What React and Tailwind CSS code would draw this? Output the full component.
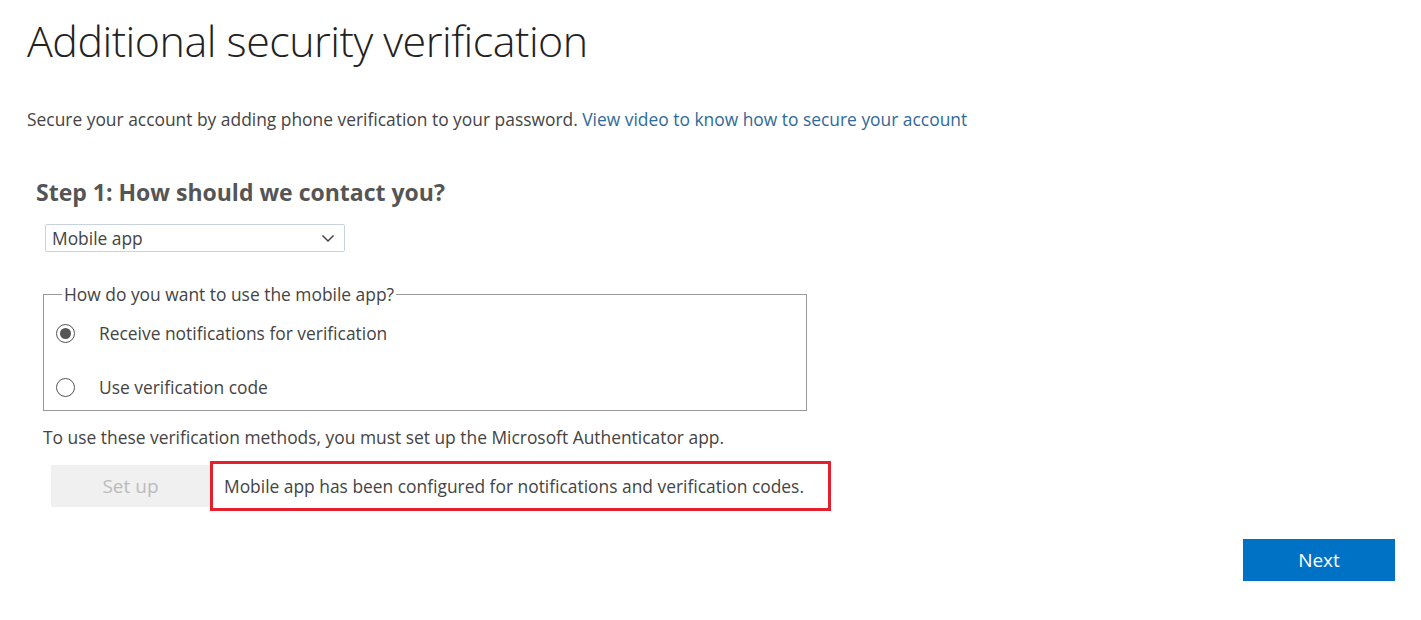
export default function App() {
  return (
    <div className="min-h-[620px] w-full bg-white text-[#333] font-['Open_Sans',sans-serif] relative">
      <div className="pl-[27px] pt-[13px]">
        <h1 className="text-[43px] font-light leading-[56px] text-[#222] tracking-[-0.5px]">Additional security verification</h1>

        <p className="mt-[38px] text-[17.4px] leading-[24px] text-[#444]">
          Secure your account by adding phone verification to your password.{' '}
          <a className="text-[#2f6a99]">View video to know how to secure your account</a>
        </p>

        <div className="pl-[9px] mt-[46px]">
          <h2 className="text-[23px] font-bold text-[#555] leading-[30px]">Step 1: How should we contact you?</h2>
          <div className="mt-[17px] ml-[9px] w-[300px] h-[28px] border border-[#c9d3dd] rounded-[2px] flex items-center justify-between pl-[6px] pr-[8px]">
            <span className="text-[17.4px] text-[#444] leading-[24px]">Mobile app</span>
            <svg viewBox="0 0 16 16" className="w-[16px] h-[16px]" fill="none" stroke="#444" strokeWidth="1.5">
              <path d="M2.5 5.5l5.5 5.5 5.5-5.5" />
            </svg>
          </div>
        </div>

        <fieldset className="mt-[31px] ml-[16px] w-[764px] h-[128px] border border-[#999] px-[12px] pb-[8px]">
          <legend className="px-[2px] ml-[6px] text-[17.4px] text-[#444] leading-[22px]">How do you want to use the mobile app?</legend>
          <div className="flex items-center h-[30px] mt-[13px]">
            <span className="w-[19px] h-[19px] rounded-full border border-[#555] flex items-center justify-center">
              <span className="w-[11px] h-[11px] rounded-full bg-[#555]" />
            </span>
            <span className="ml-[24px] text-[17.4px] text-[#444]">Receive notifications for verification</span>
          </div>
          <div className="flex items-center h-[30px] mt-[24px]">
            <span className="w-[19px] h-[19px] rounded-full border border-[#555]" />
            <span className="ml-[24px] text-[17.4px] text-[#444]">Use verification code</span>
          </div>
        </fieldset>

        <p className="mt-[14px] ml-[16px] text-[17.4px] text-[#444] leading-[24px]">
          To use these verification methods, you must set up the Microsoft Authenticator app.
        </p>

        <div className="mt-[12px] ml-[24px] flex items-center">
          <button className="w-[159px] h-[42px] bg-[#f0f0f0] text-[#bbb] text-[19px]">Set up</button>
          <div className="h-[50px] w-[621px] border-[3px] border-[#e3202c] flex items-center pl-[11px] text-[17.4px] text-[#444]">
            Mobile app has been configured for notifications and verification codes.
          </div>
        </div>
      </div>

      <div className="flex justify-end pr-[26px] mt-[28px]">
        <button className="w-[152px] h-[42px] bg-[#0072c6] text-white text-[19px]">Next</button>
      </div>
    </div>
  )
}
